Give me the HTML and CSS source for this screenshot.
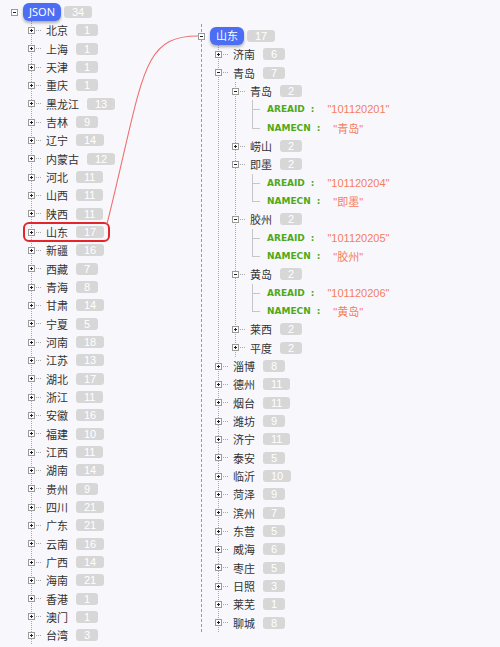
FILE: index.html
```html
<!DOCTYPE html>
<html lang="zh">
<head>
<meta charset="utf-8">
<title>JSON tree</title>
<link rel="stylesheet" href="styles.css">
</head>
<body>
<div class="page">
  <div class="left">
    <div class="node">
      <div class="row"><span class="exp"></span><span class="stub none"></span><span class="pill">JSON</span><span class="badge">34</span></div>
      <div class="children">
        <div class="node"><div class="row"><span class="exp plus"></span><span class="stub"></span><span class="label">北京</span><span class="badge">1</span></div></div>
        <div class="node"><div class="row"><span class="exp plus"></span><span class="stub"></span><span class="label">上海</span><span class="badge">1</span></div></div>
        <div class="node"><div class="row"><span class="exp plus"></span><span class="stub"></span><span class="label">天津</span><span class="badge">1</span></div></div>
        <div class="node"><div class="row"><span class="exp plus"></span><span class="stub"></span><span class="label">重庆</span><span class="badge">1</span></div></div>
        <div class="node"><div class="row"><span class="exp plus"></span><span class="stub"></span><span class="label">黑龙江</span><span class="badge">13</span></div></div>
        <div class="node"><div class="row"><span class="exp plus"></span><span class="stub"></span><span class="label">吉林</span><span class="badge">9</span></div></div>
        <div class="node"><div class="row"><span class="exp plus"></span><span class="stub"></span><span class="label">辽宁</span><span class="badge">14</span></div></div>
        <div class="node"><div class="row"><span class="exp plus"></span><span class="stub"></span><span class="label">内蒙古</span><span class="badge">12</span></div></div>
        <div class="node"><div class="row"><span class="exp plus"></span><span class="stub"></span><span class="label">河北</span><span class="badge">11</span></div></div>
        <div class="node"><div class="row"><span class="exp plus"></span><span class="stub"></span><span class="label">山西</span><span class="badge">11</span></div></div>
        <div class="node"><div class="row"><span class="exp plus"></span><span class="stub"></span><span class="label">陕西</span><span class="badge">11</span></div></div>
        <div class="node"><div class="row sel"><span class="exp plus"></span><span class="stub"></span><span class="label">山东</span><span class="badge">17</span></div></div>
        <div class="node"><div class="row"><span class="exp plus"></span><span class="stub"></span><span class="label">新疆</span><span class="badge">16</span></div></div>
        <div class="node"><div class="row"><span class="exp plus"></span><span class="stub"></span><span class="label">西藏</span><span class="badge">7</span></div></div>
        <div class="node"><div class="row"><span class="exp plus"></span><span class="stub"></span><span class="label">青海</span><span class="badge">8</span></div></div>
        <div class="node"><div class="row"><span class="exp plus"></span><span class="stub"></span><span class="label">甘肃</span><span class="badge">14</span></div></div>
        <div class="node"><div class="row"><span class="exp plus"></span><span class="stub"></span><span class="label">宁夏</span><span class="badge">5</span></div></div>
        <div class="node"><div class="row"><span class="exp plus"></span><span class="stub"></span><span class="label">河南</span><span class="badge">18</span></div></div>
        <div class="node"><div class="row"><span class="exp plus"></span><span class="stub"></span><span class="label">江苏</span><span class="badge">13</span></div></div>
        <div class="node"><div class="row"><span class="exp plus"></span><span class="stub"></span><span class="label">湖北</span><span class="badge">17</span></div></div>
        <div class="node"><div class="row"><span class="exp plus"></span><span class="stub"></span><span class="label">浙江</span><span class="badge">11</span></div></div>
        <div class="node"><div class="row"><span class="exp plus"></span><span class="stub"></span><span class="label">安徽</span><span class="badge">16</span></div></div>
        <div class="node"><div class="row"><span class="exp plus"></span><span class="stub"></span><span class="label">福建</span><span class="badge">10</span></div></div>
        <div class="node"><div class="row"><span class="exp plus"></span><span class="stub"></span><span class="label">江西</span><span class="badge">11</span></div></div>
        <div class="node"><div class="row"><span class="exp plus"></span><span class="stub"></span><span class="label">湖南</span><span class="badge">14</span></div></div>
        <div class="node"><div class="row"><span class="exp plus"></span><span class="stub"></span><span class="label">贵州</span><span class="badge">9</span></div></div>
        <div class="node"><div class="row"><span class="exp plus"></span><span class="stub"></span><span class="label">四川</span><span class="badge">21</span></div></div>
        <div class="node"><div class="row"><span class="exp plus"></span><span class="stub"></span><span class="label">广东</span><span class="badge">21</span></div></div>
        <div class="node"><div class="row"><span class="exp plus"></span><span class="stub"></span><span class="label">云南</span><span class="badge">16</span></div></div>
        <div class="node"><div class="row"><span class="exp plus"></span><span class="stub"></span><span class="label">广西</span><span class="badge">14</span></div></div>
        <div class="node"><div class="row"><span class="exp plus"></span><span class="stub"></span><span class="label">海南</span><span class="badge">21</span></div></div>
        <div class="node"><div class="row"><span class="exp plus"></span><span class="stub"></span><span class="label">香港</span><span class="badge">1</span></div></div>
        <div class="node"><div class="row"><span class="exp plus"></span><span class="stub"></span><span class="label">澳门</span><span class="badge">1</span></div></div>
        <div class="node"><div class="row"><span class="exp plus"></span><span class="stub"></span><span class="label">台湾</span><span class="badge">3</span></div></div>
      </div>
    </div>
  </div>

  <div class="right">
    <div class="node">
      <div class="row"><span class="exp"></span><span class="stub none"></span><span class="pill">山东</span><span class="badge">17</span></div>
      <div class="children">
        <div class="node"><div class="row"><span class="exp plus"></span><span class="stub"></span><span class="label">济南</span><span class="badge">6</span></div></div>
        <div class="node">
          <div class="row"><span class="exp"></span><span class="stub"></span><span class="label">青岛</span><span class="badge">7</span></div>
          <div class="children">
            <div class="node">
              <div class="row"><span class="exp"></span><span class="stub"></span><span class="label">青岛</span><span class="badge">2</span></div>
              <div class="children leaves">
                <div class="node"><div class="row"><span class="elbow"></span><span class="key">AREAID<span class="colon">:</span></span><span class="val">"101120201"</span></div></div>
                <div class="node last"><div class="row"><span class="elbow"></span><span class="key">NAMECN<span class="colon">:</span></span><span class="val">"青岛"</span></div></div>
              </div>
            </div>
            <div class="node"><div class="row"><span class="exp plus"></span><span class="stub"></span><span class="label">崂山</span><span class="badge">2</span></div></div>
            <div class="node">
              <div class="row"><span class="exp"></span><span class="stub"></span><span class="label">即墨</span><span class="badge">2</span></div>
              <div class="children leaves">
                <div class="node"><div class="row"><span class="elbow"></span><span class="key">AREAID<span class="colon">:</span></span><span class="val">"101120204"</span></div></div>
                <div class="node last"><div class="row"><span class="elbow"></span><span class="key">NAMECN<span class="colon">:</span></span><span class="val">"即墨"</span></div></div>
              </div>
            </div>
            <div class="node">
              <div class="row"><span class="exp"></span><span class="stub"></span><span class="label">胶州</span><span class="badge">2</span></div>
              <div class="children leaves">
                <div class="node"><div class="row"><span class="elbow"></span><span class="key">AREAID<span class="colon">:</span></span><span class="val">"101120205"</span></div></div>
                <div class="node last"><div class="row"><span class="elbow"></span><span class="key">NAMECN<span class="colon">:</span></span><span class="val">"胶州"</span></div></div>
              </div>
            </div>
            <div class="node">
              <div class="row"><span class="exp"></span><span class="stub"></span><span class="label">黄岛</span><span class="badge">2</span></div>
              <div class="children leaves">
                <div class="node"><div class="row"><span class="elbow"></span><span class="key">AREAID<span class="colon">:</span></span><span class="val">"101120206"</span></div></div>
                <div class="node last"><div class="row"><span class="elbow"></span><span class="key">NAMECN<span class="colon">:</span></span><span class="val">"黄岛"</span></div></div>
              </div>
            </div>
            <div class="node"><div class="row"><span class="exp plus"></span><span class="stub"></span><span class="label">莱西</span><span class="badge">2</span></div></div>
            <div class="node"><div class="row"><span class="exp plus"></span><span class="stub"></span><span class="label">平度</span><span class="badge">2</span></div></div>
          </div>
        </div>
        <div class="node"><div class="row"><span class="exp plus"></span><span class="stub"></span><span class="label">淄博</span><span class="badge">8</span></div></div>
        <div class="node"><div class="row"><span class="exp plus"></span><span class="stub"></span><span class="label">德州</span><span class="badge">11</span></div></div>
        <div class="node"><div class="row"><span class="exp plus"></span><span class="stub"></span><span class="label">烟台</span><span class="badge">11</span></div></div>
        <div class="node"><div class="row"><span class="exp plus"></span><span class="stub"></span><span class="label">潍坊</span><span class="badge">9</span></div></div>
        <div class="node"><div class="row"><span class="exp plus"></span><span class="stub"></span><span class="label">济宁</span><span class="badge">11</span></div></div>
        <div class="node"><div class="row"><span class="exp plus"></span><span class="stub"></span><span class="label">泰安</span><span class="badge">5</span></div></div>
        <div class="node"><div class="row"><span class="exp plus"></span><span class="stub"></span><span class="label">临沂</span><span class="badge">10</span></div></div>
        <div class="node"><div class="row"><span class="exp plus"></span><span class="stub"></span><span class="label">菏泽</span><span class="badge">9</span></div></div>
        <div class="node"><div class="row"><span class="exp plus"></span><span class="stub"></span><span class="label">滨州</span><span class="badge">7</span></div></div>
        <div class="node"><div class="row"><span class="exp plus"></span><span class="stub"></span><span class="label">东营</span><span class="badge">5</span></div></div>
        <div class="node"><div class="row"><span class="exp plus"></span><span class="stub"></span><span class="label">威海</span><span class="badge">6</span></div></div>
        <div class="node"><div class="row"><span class="exp plus"></span><span class="stub"></span><span class="label">枣庄</span><span class="badge">5</span></div></div>
        <div class="node"><div class="row"><span class="exp plus"></span><span class="stub"></span><span class="label">日照</span><span class="badge">3</span></div></div>
        <div class="node"><div class="row"><span class="exp plus"></span><span class="stub"></span><span class="label">莱芜</span><span class="badge">1</span></div></div>
        <div class="node"><div class="row"><span class="exp plus"></span><span class="stub"></span><span class="label">聊城</span><span class="badge">8</span></div></div>
      </div>
    </div>
  </div>
</div>

<svg class="link" width="500" height="647" viewBox="0 0 500 647">
  <path d="M107,224 C144,76 140,36 198,36" />
</svg>
</body>
</html>
```

FILE: styles.css
```css
* { box-sizing: border-box; }

body {
  margin: 0;
  width: 500px;
  height: 647px;
  overflow: hidden;
  position: relative;
  background: #f8f8fc;
  color: #333;
  font-family: "Noto Sans", "Noto Sans CJK SC", sans-serif;
  font-size: 11px;
}

.page {
  display: flex;
  align-items: flex-start;
}

.left {
  flex: none;
  width: 201px;
  padding: 3px 0 0 11px;
}

.right {
  flex: none;
  margin-top: 24px;
  padding-top: 3px;
  border-left: 1px dashed #9c9c9c;
}

.right > .node { margin-left: -4px; }

.row {
  position: relative;
  display: flex;
  align-items: center;
  height: 18.333px;
  width: max-content;
  white-space: nowrap;
}

.exp {
  flex: none;
  position: relative;
  width: 7px;
  height: 7px;
  border: 1px solid #9a9a9a;
  background: #fff;
}
.exp::before {
  content: "";
  position: absolute;
  left: 1px;
  top: 2px;
  width: 3px;
  height: 1px;
  background: #222;
}
.exp.plus::after {
  content: "";
  position: absolute;
  left: 2px;
  top: 1px;
  width: 1px;
  height: 3px;
  background: #222;
}

.stub {
  flex: none;
  width: 5px;
  margin: 0 5px 0 1px;
  border-top: 1px dotted #a8a8a8;
}
.stub.none { border-top-color: transparent; }

.label { color: #333; }

.badge {
  flex: none;
  margin-left: 8px;
  height: 12px;
  padding: 0 8px;
  border-radius: 3px;
  background: #d7d7d7;
  color: #fff;
  font-family: "Liberation Sans", sans-serif;
  font-size: 11px;
  line-height: 12px;
}

.pill {
  margin-left: -6px;
  height: 18px;
  padding: 0 6px;
  border-radius: 6px;
  background: #4b6ef5;
  color: #fff;
  line-height: 18px;
  box-shadow: 0 2px 3px rgba(0, 0, 0, 0.3);
}
.pill + .badge { margin-left: 3px; }

.children {
  margin-left: 20px;
  border-left: 1px dotted #a8a8a8;
}
.children > .node { margin-left: -4px; }

.children.leaves {
  margin-left: 21px;
  border-left: none;
}

.elbow {
  flex: none;
  position: relative;
  align-self: stretch;
  width: 8px;
  margin: 0 7px 0 3px;
  border-left: 1px solid #c6c6c6;
}
.elbow::after {
  content: "";
  position: absolute;
  left: 0;
  top: 9px;
  width: 7px;
  border-top: 1px solid #c6c6c6;
}
.last .elbow {
  align-self: flex-start;
  height: 10px;
}

.key {
  color: #4fa81a;
  font-family: "DejaVu Sans", sans-serif;
  font-weight: bold;
  font-size: 9px;
}
.colon { margin-left: 6px; }

.val {
  margin-left: 13px;
  color: #f47d5e;
  font-family: "Liberation Sans", "Noto Sans CJK SC", sans-serif;
  font-size: 11px;
}

.row.sel::after {
  content: "";
  position: absolute;
  top: -1px;
  bottom: -1px;
  left: -5px;
  right: -6px;
  border: 2px solid #e3262c;
  border-radius: 6px;
}

.link {
  position: absolute;
  left: 0;
  top: 0;
  pointer-events: none;
}
.link path {
  fill: none;
  stroke: #ef7070;
  stroke-width: 1.1;
}
```
